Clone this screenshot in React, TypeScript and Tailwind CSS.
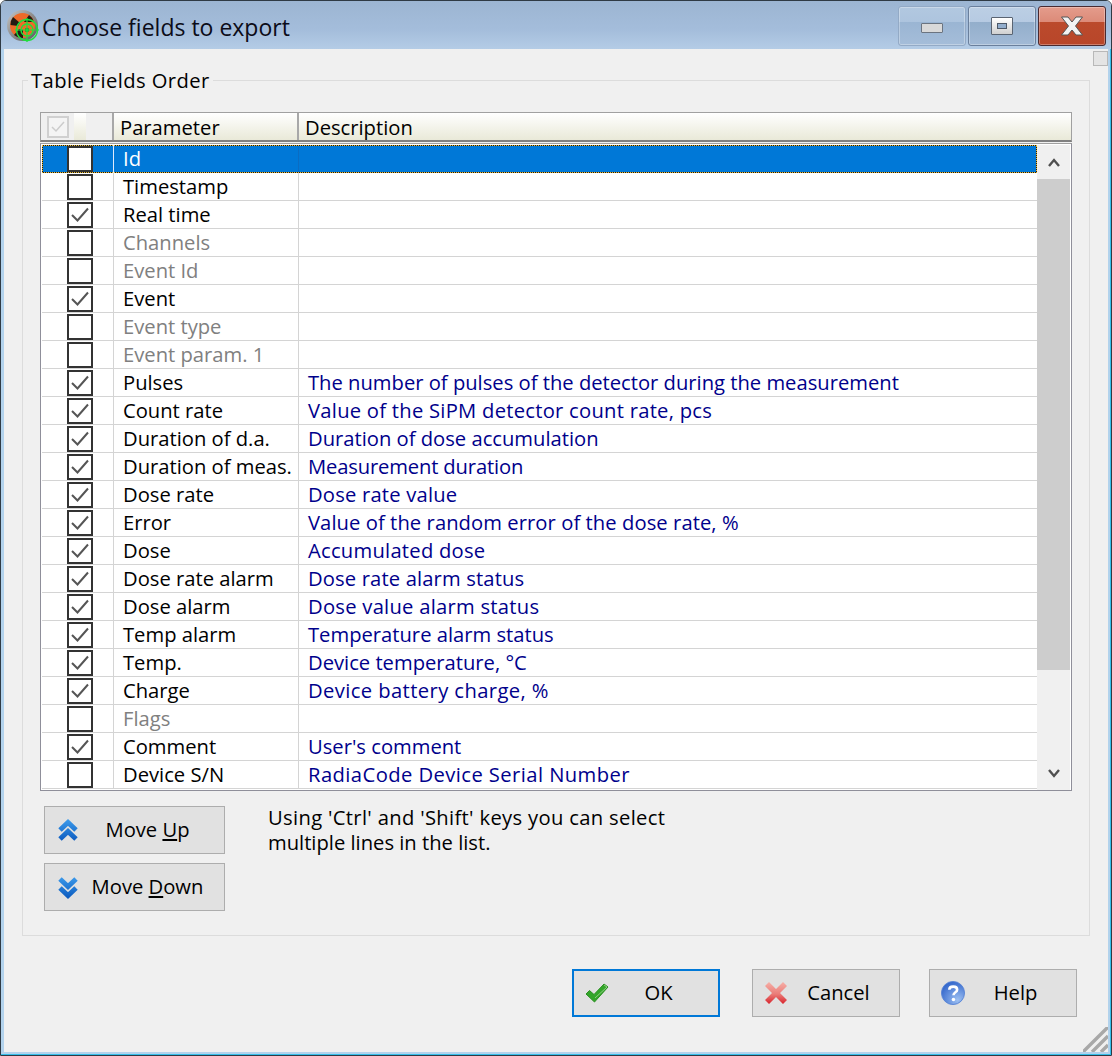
const FONT = 'font-["Open_Sans","Noto_Sans",sans-serif]';

const rows: [string, boolean, boolean, string, string?][] = [
  ["Id", false, false, ""],
  ["Timestamp", false, false, ""],
  ["Real time", true, false, ""],
  ["Channels", false, true, ""],
  ["Event Id", false, true, ""],
  ["Event", true, false, ""],
  ["Event type", false, true, ""],
  ["Event param. 1", false, true, ""],
  ["Pulses", true, false, "The number of pulses of the detector during the measurement"],
  ["Count rate", true, false, "Value of the SiPM detector count rate, pcs", "tracking-[0.26px]"],
  ["Duration of d.a.", true, false, "Duration of dose accumulation"],
  ["Duration of meas.", true, false, "Measurement duration", "tracking-[-0.15px]"],
  ["Dose rate", true, false, "Dose rate value", "tracking-[0.2px]"],
  ["Error", true, false, "Value of the random error of the dose rate, %", "tracking-[0.07px]"],
  ["Dose", true, false, "Accumulated dose", "tracking-[0.25px]"],
  ["Dose rate alarm", true, false, "Dose rate alarm status", "tracking-[0.14px]"],
  ["Dose alarm", true, false, "Dose value alarm status", "tracking-[0.26px]"],
  ["Temp alarm", true, false, "Temperature alarm status"],
  ["Temp.", true, false, "Device temperature, °C"],
  ["Charge", true, false, "Device battery charge, %", "tracking-[0.4px]"],
  ["Flags", false, true, ""],
  ["Comment", true, false, "User's comment"],
  ["Device S/N", false, false, "RadiaCode Device Serial Number", "tracking-[0.43px]"],
];

function Check({ on }: { on: boolean }) {
  return (
    <div className="w-[26px] h-[26px] border-2 border-[#333333] bg-white flex items-center justify-center">
      {on && (
        <svg width="20" height="20" viewBox="0 0 20 20" fill="none">
          <path d="M2 10 L7.5 15.5 L18 3.5" stroke="#555555" strokeWidth="2" />
        </svg>
      )}
    </div>
  );
}

function AppIcon() {
  return (
    <svg width="32" height="32" viewBox="0 0 32 32">
      <defs>
        <linearGradient id="ring" x1="0" y1="0" x2="1" y2="1">
          <stop offset="0" stopColor="#c8c8c8" />
          <stop offset="0.5" stopColor="#8c8c8c" />
          <stop offset="1" stopColor="#5a5a5a" />
        </linearGradient>
      </defs>
      <circle cx="15.5" cy="15.5" r="15.5" fill="url(#ring)" />
      <circle cx="15.5" cy="15.5" r="12.5" fill="#ee6a28" />
      <path d="M13 13 L6 7 A12 12 0 0 0 3.5 15 L11 16 Z" fill="#241a12" />
      <path d="M17 12 L22 5 A12 12 0 0 1 27 12 Z" fill="#241a12" />
      <path d="M12 19 L7 25 A12 12 0 0 0 16 28 L16 20 Z" fill="#241a12" />
      <circle cx="20" cy="20" r="10.5" fill="none" stroke="#1fe03c" strokeWidth="1.4" />
      <circle cx="20" cy="20" r="6" fill="none" stroke="#1fe03c" strokeWidth="1.4" />
      <circle cx="20" cy="20" r="2.2" fill="#11a02a" />
      <path d="M20 8 V32 M8 20 H32" stroke="#1fe03c" strokeWidth="1.2" />
    </svg>
  );
}

function TitleBtn({ kind }: { kind: "min" | "max" | "close" }) {
  const cls =
    kind === "close"
      ? "bg-[linear-gradient(#e49c8c_0,#dc8a78_40%,#bb4a2c_40%,#b8462a_100%)] border-[#4a2a30]"
      : kind === "max"
      ? "bg-[linear-gradient(#bccfe4_0,#b6cae2_40%,#93aecb_40%,#a2bad6_100%)] border-[#6a7f9c]"
      : "bg-[linear-gradient(#b2c8e0_0,#adc4de_40%,#9ab5d3_40%,#a5bdd9_100%)] border-[#93aac6]";
  return (
    <div className={`w-[68px] h-[40px] border rounded-[3px] flex items-center justify-center shadow-[inset_0_0_0_1px_rgba(255,255,255,0.3)] ${cls}`}>
      {kind === "min" && <div className="w-[22px] h-[10px] mt-[3px] bg-[#d9d9d9] border border-[#6b7480] rounded-[1px]" />}
      {kind === "max" && (
        <div className="w-[22px] h-[18px] mt-[-1px] bg-[linear-gradient(#ffffff,#d0d0d0)] border border-[#5a6472] rounded-[1px] flex items-center justify-center">
          <div className="w-[10px] h-[6px] bg-[#92adcc] border border-[#4c5868]" />
        </div>
      )}
      {kind === "close" && (
        <svg width="24" height="20" viewBox="0 0 24 20" className="mt-[-1px]">
          <path d="M1.5 1 H8 L12 6 L16 1 H22.5 L15.5 10 L22.5 19 H16 L12 14 L8 19 H1.5 L8.5 10 Z" fill="#f2f2f2" stroke="#555555" strokeWidth="1" />
        </svg>
      )}
    </div>
  );
}

function Chevrons({ up }: { up: boolean }) {
  const id = up ? "cu" : "cd";
  const a = up ? "M2 11 L10 3.5 L18 11" : "M2 3 L10 10.5 L18 3";
  const b = up ? "M2 20 L10 12.5 L18 20" : "M2 12 L10 19.5 L18 12";
  return (
    <svg width="20" height="23" viewBox="0 0 20 23">
      <defs>
        <linearGradient id={id} gradientUnits="userSpaceOnUse" x1="0" y1="0" x2="0" y2="23">
          <stop offset="0" stopColor="#3d9cec" />
          <stop offset="1" stopColor="#0a58bd" />
        </linearGradient>
      </defs>
      <path d={a} fill="none" stroke={`url(#${id})`} strokeWidth="5" />
      <path d={b} fill="none" stroke={`url(#${id})`} strokeWidth="5" />
    </svg>
  );
}

function SideBtn({ up, children }: { up: boolean; children: React.ReactNode }) {
  return (
    <div className="w-[181px] h-[48px] bg-[#e1e1e1] border border-[#adadad] flex items-center pl-[13px]">
      <Chevrons up={up} />
      <span className="flex-1 text-center pr-[7px] pb-[2px]">{children}</span>
    </div>
  );
}

function DlgBtn({ icon, label, focus }: { icon: React.ReactNode; label: string; focus?: boolean }) {
  return (
    <div className={`w-[148px] h-[48px] bg-[#e1e1e1] flex items-center pl-[11px] ${focus ? "border-2 border-[#0078d7]" : "border border-[#adadad]"}`}>
      <div className="w-[24px] flex justify-center">{icon}</div>
      <span className="flex-1 text-center pr-[10px] pb-[2px]">{label}</span>
    </div>
  );
}

function OkIcon() {
  return (
    <svg width="24" height="20" viewBox="0 0 24 20">
      <path d="M1 11 L4.5 7.5 L9 11.5 L19 1 L23 4 L9.5 19 Z" fill="#33a52a" stroke="#2a8f22" strokeWidth="1" strokeLinejoin="round" />
      <path d="M19 2 L22 4 L10 15" fill="none" stroke="#8ed080" strokeWidth="1" />
    </svg>
  );
}

function CancelIcon() {
  return (
    <svg width="24" height="24" viewBox="0 0 24 24">
      <defs>
        <linearGradient id="cx" x1="0" y1="0" x2="0" y2="1">
          <stop offset="0" stopColor="#f6b0a8" />
          <stop offset="0.55" stopColor="#ea7c78" />
          <stop offset="1" stopColor="#d8232c" />
        </linearGradient>
      </defs>
      <path d="M1 5 L5 1 L12 8 L19 1 L23 5 L16 12 L23 19 L19 23 L12 16 L5 23 L1 19 L8 12 Z" fill="url(#cx)" />
    </svg>
  );
}

function HelpIcon() {
  return (
    <svg width="26" height="26" viewBox="0 0 26 26">
      <defs>
        <radialGradient id="hb" cx="0.7" cy="0.8" r="0.9">
          <stop offset="0" stopColor="#9dc0f2" />
          <stop offset="1" stopColor="#2a5fc8" />
        </radialGradient>
      </defs>
      <circle cx="13" cy="13" r="12.5" fill="url(#hb)" stroke="#5a86d6" />
      <path d="M9 9.5 C9 5 17.5 5 17.5 9.5 C17.5 12.5 13.5 12 13.5 15.5" fill="none" stroke="#ffffff" strokeWidth="2.8" />
      <circle cx="13.5" cy="20" r="1.9" fill="#ffffff" />
    </svg>
  );
}

export default function App() {
  return (
    <div className={`relative w-[1112px] h-[1056px] flex flex-col bg-[#f0f0f0] text-[20.2px] leading-[28px] text-black overflow-hidden ${FONT} border border-[#2f3a44] rounded-t-[6px]`}>
      <div className="h-[48px] flex items-center pl-[6px] pr-[5px] bg-[linear-gradient(#9cb5d2,#a4bddb_60%,#b4cce6)] text-[23px]">
        <div className="mt-[2px] flex"><AppIcon /></div>
        <span className="ml-[3px] mt-[4px] text-[#0c0c18]">Choose fields to export</span>
        <div className="ml-auto flex gap-[2px] mt-[2px] items-center">
          <TitleBtn kind="min" />
          <TitleBtn kind="max" />
          <TitleBtn kind="close" />
        </div>
      </div>

      <div className="flex-1 flex flex-col border-r border-b border-[#35bfea]">
        <div className="flex-1 flex flex-col border-l-[3px] border-r-[2px] border-b-[2px] border-[#b2d2ec] px-[18px] pt-[18px] pb-[15px]">
          <fieldset className="h-[869px] border border-[#dcdcdc] pl-[17px] pr-[17px] pt-[19px]">
            <legend className="-ml-[12px] px-[3px] leading-[26px] h-[26px] tracking-[0.4px]">Table Fields Order</legend>
            <div className="w-[1032px]">
              <div className="h-[30px] flex border border-[#a0a0a0] border-b-2 border-b-[#808080] bg-[linear-gradient(#ffffff,#e9e9d8)]">
                <div className="w-[73px] flex items-center bg-[#f0f0f0] border-r-2 border-[#a8a8a8] pl-[6px]">
                  <div className="w-[22px] h-[22px] border-2 border-[#d0d0d0] bg-[#f4f4f4] flex items-center justify-center">
                    <svg width="16" height="16" viewBox="0 0 16 16" fill="none"><path d="M2 8 L6 12 L14 3" stroke="#cccccc" strokeWidth="1.5" /></svg>
                  </div>
                  <div className="w-[12px] h-full ml-[5px] bg-[linear-gradient(#ffffff,#e9e9d8)]" />
                </div>
                <div className="w-[185px] pl-[6px] border-r-2 border-[#a8a8a8] leading-[29px]">Parameter</div>
                <div className="flex-1 pl-[6px] leading-[29px]">Description</div>
              </div>
              <div className="mt-[1px] h-[648px] border border-[#8f8f9a] border-t-[#a0a0a0] flex bg-white pt-[1px] pl-[1px]">
                <div className="flex-1 min-w-0">
                  {rows.map(([name, on, dim, desc, tr], i) => (
                    <div
                      key={name}
                      className={`h-[28px] flex items-stretch leading-[26px] ${
                        i === 0
                          ? "bg-[#0078d7] shadow-[inset_0_0_0_1px_#1a1a1a] outline-1 -outline-offset-1 outline-dotted outline-[#e8b830]"
                          : "border-b border-[#d4d4d4]"
                      }`}
                    >
                      <div className="w-[71px] flex items-center justify-center pl-[5px]"><Check on={on} /></div>
                      <div className={`w-[185px] pl-[9px] border-l ${i === 0 ? "border-[#dfeafc] text-white" : "border-[#d4d4d4]"} ${dim ? "text-[#808080]" : ""}`}>{name}</div>
                      <div className={`flex-1 pl-[9px] border-l ${i === 0 ? "border-[#0a6cc2]" : "border-[#d4d4d4] text-[#00008b]"} ${tr ?? ""}`}>{desc}</div>
                    </div>
                  ))}
                </div>
                <div className="w-[33px] flex flex-col items-center bg-[#f0f0f0] mr-[1px]">
                  <div className="h-[34px] flex items-center justify-center">
                    <svg width="12" height="9" viewBox="0 0 12 9" fill="none"><path d="M1 8 L6 2 L11 8" stroke="#505050" strokeWidth="2.4" /></svg>
                  </div>
                  <div className="w-full h-[491px] bg-[#cdcdcd]" />
                  <div className="mt-auto h-[34px] flex items-center justify-center">
                    <svg width="12" height="9" viewBox="0 0 12 9" fill="none"><path d="M1 1 L6 7 L11 1" stroke="#505050" strokeWidth="2.4" /></svg>
                  </div>
                </div>
              </div>
              <div className="flex mt-[15px] pl-[4px]">
                <div className="flex flex-col gap-[9px]">
                  <SideBtn up={true}>Move <span className="underline">U</span>p</SideBtn>
                  <SideBtn up={false}>Move <span className="underline">D</span>own</SideBtn>
                </div>
                <div className="ml-[43px] leading-[25px] mt-[-1px]">
                  <div className="tracking-[0.33px]">Using 'Ctrl' and 'Shift' keys you can select</div>
                  <div>multiple lines in the list.</div>
                </div>
              </div>
            </div>
          </fieldset>
          <div className="flex justify-end gap-[32px] mt-[33px] pr-[13px]">
            <DlgBtn icon={<OkIcon />} label="OK" focus />
            <DlgBtn icon={<CancelIcon />} label="Cancel" />
            <div className="-ml-[3px]"><DlgBtn icon={<HelpIcon />} label="Help" /></div>
          </div>
        </div>
      </div>

      <div className="absolute top-[50px] right-[3px] w-[15px] h-[15px] bg-[#e4e4e4] border border-[#b8b8b8]" />
      <svg className="absolute right-[3px] bottom-[3px]" width="25" height="25" viewBox="0 0 25 25" fill="none">
        <path d="M25 0 L0 25 M25 9 L9 25 M25 18 L18 25" stroke="#a8a8a8" strokeWidth="3.4" />
      </svg>
    </div>
  );
}
